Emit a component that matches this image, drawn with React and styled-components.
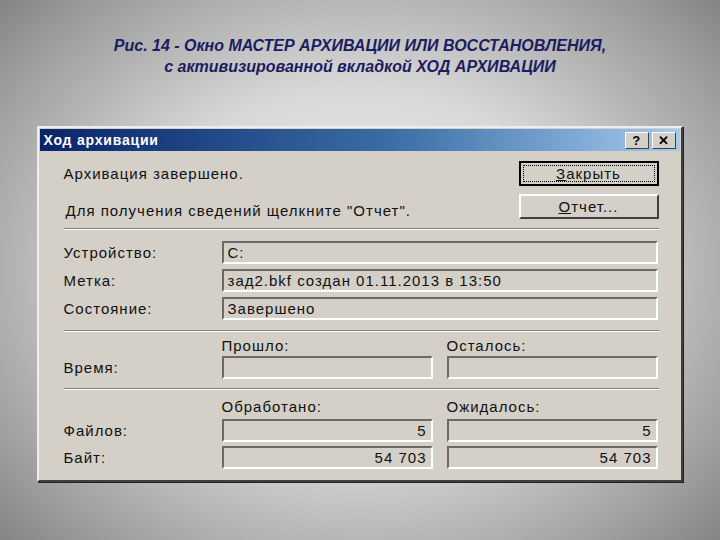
import React from "react";
import styled, { createGlobalStyle } from "styled-components";

const Global = createGlobalStyle`
  html, body { margin: 0; padding: 0; }
  body { width: 720px; height: 540px; overflow: hidden;
    background: radial-gradient(ellipse 70% 75% at 50% 50%, #f4f4f4 0%, #d8d8d8 45%, #9a9a9a 85%, #808080 100%);
    font-family: "Liberation Sans", Arial, sans-serif; }
`;

const Page = styled.div`
  width: 720px; height: 540px; display: flex; flex-direction: column; align-items: center;
`;
const Caption = styled.div`
  margin-top: 35px; text-align: center; font-style: italic; font-weight: bold;
  font-size: 16px; line-height: 21px; color: #1c1c60;
`;
const Win = styled.div`
  margin-top: 49px; margin-left: -1px; width: 646px; height: 356px; background: #d4d0c8;
  border: 2px solid; border-color: #eeeeee #404040 #404040 #eeeeee; box-sizing: border-box;
  box-shadow: 1px 1px 0 #222;
`;
const Title = styled.div`
  height: 22px; margin: 1px; display: flex; align-items: center; justify-content: space-between;
  background: linear-gradient(90deg, #0a246a, #3a6ea5 55%, #a6caf0);
  color: #fff; font-weight: bold; font-size: 14px; padding: 0 4px 0 4px; letter-spacing: 0.8px;
`;
const TBtns = styled.div` display: flex; gap: 3px; `;
const TBtn = styled.div`
  width: 24px; height: 17px; background: #d4d0c8; color: #000; display: flex; align-items: center;
  justify-content: center; font-size: 13px; font-weight: bold; box-sizing: border-box;
  border: 1px solid; border-color: #fff #404040 #404040 #fff;
`;
const Body = styled.div`
  padding: 9px 22px 0 25px; font-size: 15px; letter-spacing: 1px; color: #111;
`;
const Top = styled.div` display: grid; grid-template-columns: 1fr 140px; row-gap: 8px; `;
const Msg = styled.div` display: flex; align-items: ${p => p.end ? "flex-end" : "center"}; `;
const Btn = styled.div`
  height: 25px; box-sizing: border-box; display: flex; align-items: center; justify-content: center;
  border: 2px solid;
  border-color: ${p => p.def ? "#000" : "#fff #404040 #404040 #fff"};
  outline: ${p => p.def ? "1px dotted #000" : "none"}; outline-offset: -5px;
  u { text-decoration: underline; }
`;
const Sep = styled.div`
  height: 0; border-top: 1px solid #808080; border-bottom: 1px solid #fff; margin: ${p => p.m || "9px 0"};
`;
const Grid = styled.div`
  display: grid; grid-template-columns: 144px 211px 211px; column-gap: 14px; row-gap: ${p => p.gap || 6}px;
  align-items: center;
`;
const Field = styled.div`
  height: 23px; box-sizing: border-box; grid-column: ${p => p.span ? "2 / 4" : "auto"};
  border: 2px solid; border-color: #6a6a6a #fff #fff #6a6a6a; padding: 0 4px;
  display: flex; align-items: center; justify-content: ${p => p.right ? "flex-end" : "flex-start"};
  background: #d4d0c8;
`;
const Label = styled.div` line-height: 16px; `;

export default function App() {
  return (
    <Page>
      <Global />
      <Caption>Рис. 14 - Окно МАСТЕР АРХИВАЦИИ ИЛИ ВОССТАНОВЛЕНИЯ,<br />с активизированной вкладкой ХОД АРХИВАЦИИ</Caption>
      <Win>
        <Title>Ход архивации<TBtns><TBtn>?</TBtn><TBtn>✕</TBtn></TBtns></Title>
        <Body>
          <Top>
            <Msg>Архивация завершено.</Msg>
            <Btn def><u>З</u>акрыть</Btn>
            <Msg end style={{ paddingLeft: 2 }}>Для получения сведений щелкните "Отчет".</Msg>
            <Btn><u>О</u>тчет...</Btn>
          </Top>
          <Sep m="9px 0 11px" />
          <Grid gap={5}>
            <Label>Устройство:</Label><Field span>C:</Field>
            <Label>Метка:</Label><Field span>зад2.bkf создан 01.11.2013 в 13:50</Field>
            <Label>Состояние:</Label><Field span>Завершено</Field>
          </Grid>
          <Sep m="10px 0 6px" />
          <Grid gap={2}>
            <div /><Label>Прошло:</Label><Label>Осталось:</Label>
            <Label>Время:</Label><Field /><Field />
          </Grid>
          <Sep m="9px 0 9px" />
          <Grid gap={4}>
            <div /><Label>Обработано:</Label><Label>Ожидалось:</Label>
            <Label>Файлов:</Label><Field right>5</Field><Field right>5</Field>
            <Label>Байт:</Label><Field right>54 703</Field><Field right>54 703</Field>
          </Grid>
        </Body>
      </Win>
    </Page>
  );
}
